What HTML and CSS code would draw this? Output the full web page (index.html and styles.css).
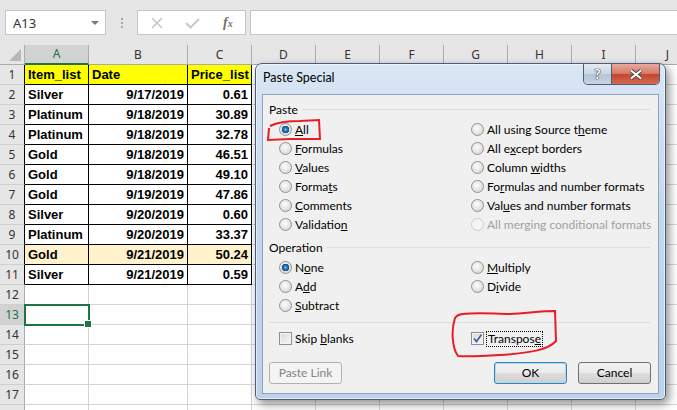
FILE: index.html
```html
<!DOCTYPE html>
<html lang="en">
<head>
    <meta charset="UTF-8">
    <meta name="viewport" content="width=device-width, initial-scale=1.0">
    <title>Paste Special</title>
    <link rel="stylesheet" href="styles.css">
</head>
<body>

<!-- name box + formula bar -->
<div class="toolbar">
    <div class="name-box"><span>A13</span><span class="caret"></span></div>
    <div class="grip"><i></i><i></i><i></i></div>
    <div class="fx-buttons">
        <svg width="12" height="12" viewBox="0 0 12 12"><path d="M1 1L11 11M11 1L1 11" stroke="#c8c8c8" stroke-width="1.6" fill="none"/></svg>
        <svg width="15" height="12" viewBox="0 0 15 12"><path d="M1 6L5.5 10.5L14 2" stroke="#c8c8c8" stroke-width="2" fill="none"/></svg>
        <span class="fx">f<small>x</small></span>
    </div>
    <div class="formula"></div>
</div>

<!-- worksheet -->
<div class="sheet">
    <div class="hrow">
        <div class="corner"><span></span></div>
        <div class="ch on">A</div>
        <div class="ch b">B</div>
        <div class="ch">C</div>
        <div class="ch">D</div>
        <div class="ch">E</div>
        <div class="ch">F</div>
        <div class="ch">G</div>
        <div class="ch">H</div>
        <div class="ch">I</div>
        <div class="ch">J</div>
    </div>
    <div class="row data head"><div class="rh">1</div><div class="cell">Item_list</div><div class="cell b">Date</div><div class="cell">Price_list</div><div class="rest"></div></div>
    <div class="row data"><div class="rh">2</div><div class="cell">Silver</div><div class="cell b num">9/17/2019</div><div class="cell num">0.61</div><div class="rest"></div></div>
    <div class="row data"><div class="rh">3</div><div class="cell">Platinum</div><div class="cell b num">9/18/2019</div><div class="cell num">30.89</div><div class="rest"></div></div>
    <div class="row data"><div class="rh">4</div><div class="cell">Platinum</div><div class="cell b num">9/18/2019</div><div class="cell num">32.78</div><div class="rest"></div></div>
    <div class="row data"><div class="rh">5</div><div class="cell">Gold</div><div class="cell b num">9/18/2019</div><div class="cell num">46.51</div><div class="rest"></div></div>
    <div class="row data"><div class="rh">6</div><div class="cell">Gold</div><div class="cell b num">9/18/2019</div><div class="cell num">49.10</div><div class="rest"></div></div>
    <div class="row data"><div class="rh">7</div><div class="cell">Gold</div><div class="cell b num">9/19/2019</div><div class="cell num">47.86</div><div class="rest"></div></div>
    <div class="row data"><div class="rh">8</div><div class="cell">Silver</div><div class="cell b num">9/20/2019</div><div class="cell num">0.60</div><div class="rest"></div></div>
    <div class="row data"><div class="rh">9</div><div class="cell">Platinum</div><div class="cell b num">9/20/2019</div><div class="cell num">33.37</div><div class="rest"></div></div>
    <div class="row data hl"><div class="rh">10</div><div class="cell">Gold</div><div class="cell b num">9/21/2019</div><div class="cell num">50.24</div><div class="rest"></div></div>
    <div class="row data"><div class="rh">11</div><div class="cell">Silver</div><div class="cell b num">9/21/2019</div><div class="cell num">0.59</div><div class="rest"></div></div>
    <div class="row"><div class="rh">12</div><div class="cell"></div><div class="cell b"></div><div class="cell"></div><div class="rest"></div></div>
    <div class="row"><div class="rh on">13</div><div class="cell sel"></div><div class="cell b"></div><div class="cell"></div><div class="rest"></div></div>
    <div class="row"><div class="rh">14</div><div class="cell"></div><div class="cell b"></div><div class="cell"></div><div class="rest"></div></div>
    <div class="row"><div class="rh">15</div><div class="cell"></div><div class="cell b"></div><div class="cell"></div><div class="rest"></div></div>
    <div class="row"><div class="rh">16</div><div class="cell"></div><div class="cell b"></div><div class="cell"></div><div class="rest"></div></div>
    <div class="row"><div class="rh">17</div><div class="cell"></div><div class="cell b"></div><div class="cell"></div><div class="rest"></div></div>
    <div class="row"><div class="rh"></div><div class="cell"></div><div class="cell b"></div><div class="cell"></div><div class="rest"></div></div>
</div>

<!-- Paste Special dialog -->
<div class="dialog">
    <div class="titlebar">
        <span class="title">Paste Special</span>
        <div class="caption">
            <span class="help">?</span>
            <span class="close">
                <svg width="14" height="11" viewBox="0 0 14 11"><path d="M2 1.5L12 9.5M12 1.5L2 9.5" stroke="#4a4a4a" stroke-width="4" fill="none"/><path d="M2 1.5L12 9.5M12 1.5L2 9.5" stroke="#fff" stroke-width="2" fill="none"/></svg>
            </span>
        </div>
    </div>
    <div class="client">
        <div class="legend"><span>Paste</span><i></i></div>
        <div class="options">
            <label class="opt"><span class="radio on"></span><span><u>A</u>ll</span></label>
            <label class="opt"><span class="radio"></span><span>All using Source t<u>h</u>eme</span></label>
            <label class="opt"><span class="radio"></span><span><u>F</u>ormulas</span></label>
            <label class="opt"><span class="radio"></span><span>All e<u>x</u>cept borders</span></label>
            <label class="opt"><span class="radio"></span><span><u>V</u>alues</span></label>
            <label class="opt"><span class="radio"></span><span>Column <u>w</u>idths</span></label>
            <label class="opt"><span class="radio"></span><span>Forma<u>t</u>s</span></label>
            <label class="opt"><span class="radio"></span><span>Fo<u>r</u>mulas and number formats</span></label>
            <label class="opt"><span class="radio"></span><span><u>C</u>omments</span></label>
            <label class="opt"><span class="radio"></span><span>Val<u>u</u>es and number formats</span></label>
            <label class="opt"><span class="radio"></span><span>Validatio<u>n</u></span></label>
            <label class="opt off"><span class="radio"></span><span>All merging conditional formats</span></label>
        </div>

        <div class="legend op"><span>Operation</span><i></i></div>
        <div class="options">
            <label class="opt"><span class="radio on"></span><span>N<u>o</u>ne</span></label>
            <label class="opt"><span class="radio"></span><span><u>M</u>ultiply</span></label>
            <label class="opt"><span class="radio"></span><span>A<u>d</u>d</span></label>
            <label class="opt"><span class="radio"></span><span>D<u>i</u>vide</span></label>
            <label class="opt"><span class="radio"></span><span><u>S</u>ubtract</span></label>
        </div>

        <div class="sep"></div>
        <div class="options checks">
            <label class="opt"><span class="check"></span><span>Skip <u>b</u>lanks</span></label>
            <label class="opt"><span class="check">
                <svg width="11" height="11" viewBox="0 0 11 11"><path d="M2 5.5L4.5 8.5L9.5 1.5" stroke="#4d62a0" stroke-width="1.8" fill="none"/></svg>
            </span><span class="focus">Transpos<u>e</u></span></label>
        </div>

        <div class="buttons">
            <span class="btn off">Paste Link</span>
            <span class="btn def">OK</span>
            <span class="btn">Cancel</span>
        </div>
    </div>
</div>

<!-- red pen marks -->
<svg class="marks" width="677" height="410" viewBox="0 0 677 410">
    <path d="M270 126 C278 122 290 121 300 121 L319 120 L320 139 L290 139 L268 140 L269 128" stroke="#ea1c24" stroke-width="2" fill="none"/>
    <path d="M462 314 C480 312 495 314 510 314 C528 313 542 311 555 311 L556 341 C548 350 530 353 500 355 C485 356 470 357 458 356 C452 348 451 330 455 318 C457 315 460 314 464 314" stroke="#ea1c24" stroke-width="2" fill="none"/>
</svg>

</body>
</html>
```

FILE: styles.css
```css
* {
    box-sizing: border-box;
}
body {
    margin: 0;
    width: 677px;
    height: 410px;
    overflow: hidden;
    position: relative;
    background-color: #fff;
    font-family: "Liberation Sans", Arial, sans-serif;
    color: #000;
}

/* formula bar */
.toolbar {
    display: flex;
    align-items: flex-start;
    height: 45px;
    padding: 10px 0 0 5px;
    background-color: #e6e6e6;
}
.name-box {
    width: 101px;
    height: 25px;
    display: flex;
    align-items: center;
    justify-content: space-between;
    padding: 0 6px 0 7px;
    background-color: #fff;
    border: 1px solid #c6c6c6;
    font-family: "Noto Sans", sans-serif;
    font-size: 13px;
    color: #333;
}
.caret {
    border-left: 4px solid transparent;
    border-right: 4px solid transparent;
    border-top: 4px solid #7a7a7a;
}
.grip {
    width: 31px;
    height: 25px;
    display: flex;
    flex-direction: column;
    align-items: center;
    justify-content: center;
    gap: 2px;
}
.grip i {
    width: 2px;
    height: 2px;
    background-color: #a8a8a8;
}
.fx-buttons {
    width: 109px;
    height: 25px;
    display: flex;
    align-items: center;
    gap: 22px;
    padding-left: 13px;
    background-color: #fff;
    border: 1px solid #c6c6c6;
}
.fx {
    font-family: "Liberation Serif", serif;
    font-style: italic;
    font-weight: bold;
    font-size: 14px;
    color: #707070;
    margin-left: 1px;
}
.fx small {
    font-size: 10px;
}
.formula {
    flex: 1;
    height: 25px;
    margin-left: 4px;
    background-color: #fff;
    border: 1px solid #c6c6c6;
    border-right: none;
}

/* sheet */
.hrow,
.row {
    display: flex;
    height: 20px;
}
.corner {
    width: 25px;
    flex-shrink: 0;
    display: flex;
    justify-content: flex-end;
    align-items: flex-end;
    padding: 0 3px 3px 0;
    background-color: #e6e6e6;
    border-right: 1px solid #ababab;
    border-bottom: 1px solid #ababab;
}
.corner span {
    width: 12px;
    height: 12px;
    background-color: #b8b8b8;
    clip-path: polygon(100% 0, 100% 100%, 0 100%);
}
.ch {
    width: 64px;
    flex-shrink: 0;
    text-align: center;
    font-family: "Noto Sans", sans-serif;
    font-size: 12px;
    line-height: 19px;
    color: #333;
    background-color: #e6e6e6;
    border-right: 1px solid #ababab;
    border-bottom: 1px solid #ababab;
}
.ch.b {
    width: 99px;
}
.ch.on {
    background-color: #d2d2d2;
    color: #217346;
    border-bottom: 2px solid #217346;
    line-height: 18px;
}
.rh {
    width: 25px;
    flex-shrink: 0;
    text-align: center;
    font-family: "Noto Sans", sans-serif;
    font-size: 12px;
    line-height: 19px;
    color: #333;
    background-color: #e6e6e6;
    border-right: 1px solid #ababab;
    border-bottom: 1px solid #cfcfcf;
}
.rh.on {
    background-color: #d2d2d2;
    color: #217346;
}
.cell {
    width: 64px;
    flex-shrink: 0;
    padding: 0 3px;
    font-weight: bold;
    font-size: 13px;
    line-height: 19px;
    white-space: nowrap;
    overflow: hidden;
    border-right: 1px solid #d4d4d4;
    border-bottom: 1px solid #d4d4d4;
}
.cell.b {
    width: 99px;
}
.num {
    text-align: right;
}
.rest {
    flex: 1;
    border-bottom: 1px solid #d4d4d4;
    background-image: repeating-linear-gradient(to right, transparent 0 63px, #d4d4d4 63px 64px);
}
.data .rh {
    border-right-color: #000;
}
.data .cell {
    border-color: #000;
}
.head .cell {
    background-color: #ffff00;
}
.hl .cell {
    background-color: #fff2cc;
}
.cell.sel {
    position: relative;
    overflow: visible;
    outline: 2px solid #217346;
    outline-offset: -1px;
}
.cell.sel::after {
    content: "";
    position: absolute;
    right: -4px;
    bottom: -4px;
    width: 6px;
    height: 6px;
    background-color: #217346;
    border: 1px solid #fff;
}

/* dialog */
.dialog {
    position: absolute;
    left: 255px;
    top: 63px;
    width: 411px;
    height: 337px;
    display: flex;
    flex-direction: column;
    padding: 0 6px 5px;
    border: 1px solid #4e5e72;
    border-radius: 7px 7px 5px 5px;
    background: linear-gradient(to bottom, #d9e6f5, #c3d7ed 45%, #bdd2ea);
    box-shadow: inset 0 0 0 1px rgba(255, 255, 255, 0.55), 3px 4px 10px rgba(0, 0, 0, 0.45);
    font-family: Lato, "Noto Sans", sans-serif;
    font-size: 12px;
}
.titlebar {
    height: 30px;
    flex-shrink: 0;
    display: flex;
    align-items: flex-start;
}
.title {
    padding: 6px 0 0 1px;
    font-size: 12.5px;
    line-height: 16px;
    color: #000;
}
.caption {
    display: flex;
    margin-left: auto;
    margin-right: -1px;
    border: 1px solid #4e5e72;
    border-top: none;
    border-radius: 0 0 5px 5px;
    overflow: hidden;
}
.help {
    width: 28px;
    height: 20px;
    text-align: center;
    font-weight: bold;
    font-size: 14px;
    line-height: 19px;
    color: #fff;
    text-shadow: 0 0 1px #333, 0 0 1px #333, 0 0 1px #333;
    background: linear-gradient(to bottom, #e3ebf4, #c9d6e4 50%, #b3c4d6 51%, #c5d5e6);
    border-right: 1px solid #4e5e72;
}
.close {
    width: 47px;
    height: 20px;
    display: flex;
    align-items: center;
    justify-content: center;
    background: linear-gradient(to bottom, #e9a99d, #d57a6a 48%, #c7432d 52%, #d36a52);
}
.client {
    flex: 1;
    padding: 6px 7px 0 6px;
    background-color: #f0f0f0;
    border: 1px solid #8ea3b9;
}
.legend {
    display: flex;
    align-items: center;
    gap: 4px;
    height: 16px;
    padding-right: 1px;
}
.legend.op {
    margin-top: 5px;
}
.legend i,
.sep {
    flex: 1;
    height: 1px;
    background-color: #d5dfe5;
}
.options {
    display: grid;
    grid-template-columns: 192px 1fr;
    grid-auto-rows: 19px;
    margin-top: 3px;
    padding-left: 10px;
}
.opt {
    display: flex;
    align-items: center;
    gap: 3px;
    white-space: nowrap;
}
.opt.off {
    color: #a0a0a0;
}
.radio {
    width: 13px;
    height: 13px;
    flex-shrink: 0;
    border-radius: 50%;
    border: 1px solid #929292;
    background: radial-gradient(circle at 45% 40%, #fdfdfd, #e6e6e6 50%, #cdcdcd);
}
.radio.on {
    background:
        radial-gradient(circle at 50% 50%, #7ccaf5 0, #2a82c6 1.5px, #0f4c86 3.5px, transparent 4px),
        radial-gradient(circle at 45% 40%, #fdfdfd, #e6e6e6 50%, #cdcdcd);
}
.opt.off .radio {
    border-color: #cdcdcd;
    background: #f4f4f4;
}
.sep {
    flex: none;
    margin: 7px 1px 0 0;
}
.checks {
    margin-top: 6px;
}
.check {
    width: 13px;
    height: 13px;
    flex-shrink: 0;
    display: flex;
    align-items: center;
    justify-content: center;
    border: 1px solid #8f8f8f;
    background: linear-gradient(135deg, #d9d9d9, #f7f7f7);
    box-shadow: inset 0 0 0 1px #f4f4f4;
}
.focus {
    outline: 1px dotted #000;
    padding: 0 1px;
    line-height: 14px;
}
.buttons {
    display: flex;
    gap: 11px;
    margin-top: 14px;
}
.btn {
    width: 73px;
    height: 22px;
    text-align: center;
    line-height: 20px;
    border: 1px solid #707070;
    border-radius: 3px;
    background: linear-gradient(to bottom, #f2f2f2, #ebebeb 48%, #dddddd 52%, #cfcfcf);
}
.btn.off {
    margin-right: auto;
    color: #838383;
    border-color: #adb2b5;
    background: #f4f4f4;
}
.btn.def {
    border-color: #3c7fb1;
    box-shadow: inset 0 0 0 1px #a6dcf6;
}

/* annotations */
.marks {
    position: absolute;
    left: 0;
    top: 0;
    pointer-events: none;
}
```
